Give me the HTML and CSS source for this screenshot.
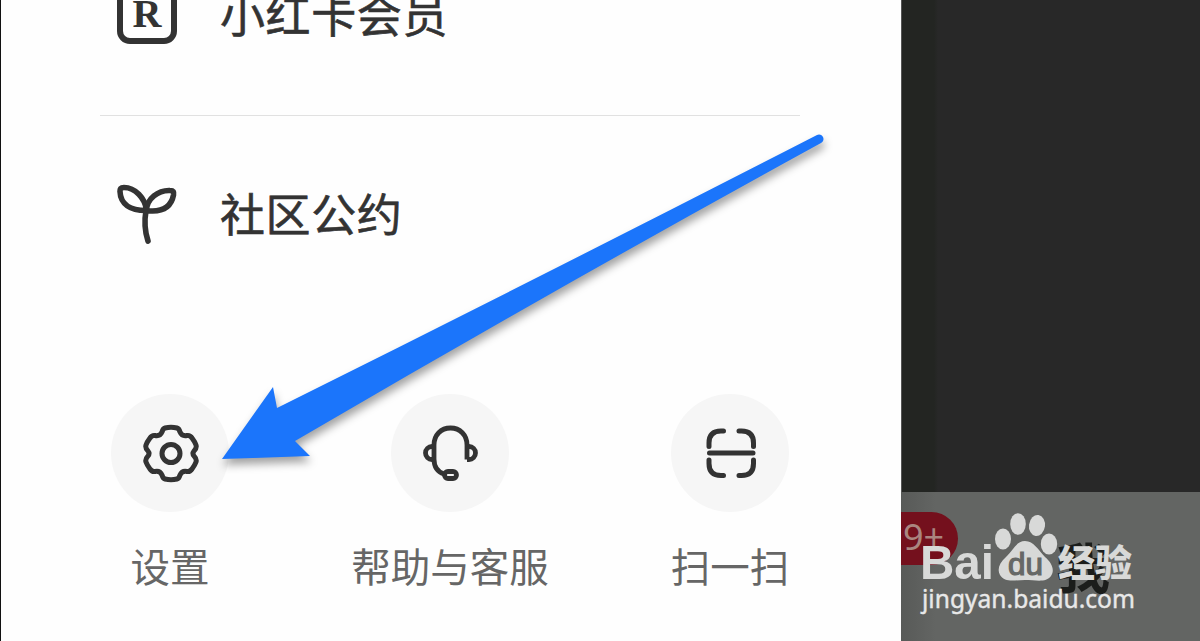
FILE: index.html
```
<!DOCTYPE html>
<html lang="zh-CN">
<head>
<meta charset="utf-8">
<title>设置</title>
<link rel="stylesheet" href="styles.css">
</head>
<body>
<div class="screen">
  <main class="drawer">
    <div class="row row-member">
      <svg class="row-icon" viewBox="0 0 64 64">
        <rect x="5" y="5" width="54" height="54" rx="10" fill="none" stroke="#333" stroke-width="6"/>
        <text class="card-letter" x="32" y="45" text-anchor="middle" textLength="29" lengthAdjust="spacingAndGlyphs">R</text>
      </svg>
      <span class="row-label">小红卡会员</span>
    </div>
    <hr class="divider">
    <div class="row row-rules">
      <svg class="row-icon" viewBox="0 0 64 64" fill="none" stroke="#333" stroke-width="5.600" stroke-linecap="round" stroke-linejoin="round">
        <path d="M31.500 28C30 16 20 5.500 9 5.500C5.500 5.500 5 7 5 9.500C5.500 22 15 28.500 31 28.500"/>
        <path d="M31.500 28C32 17 43 8 55 8.500C58.500 8.500 59 10 58.500 13C56 26 46 30.500 31 28.500C29 40 30 50 33 59"/>
      </svg>
      <span class="row-label">社区公约</span>
    </div>
    <nav class="tools">
      <div class="tool">
        <span class="tool-disc">
          <svg class="tool-icon" viewBox="0 0 60 60" fill="none" stroke="#333" stroke-width="5" stroke-linejoin="round">
            <path d="M25 5Q31 3.500 37 5Q39 5.500 40 9Q42 13.500 47 12.500Q50 12 52 15Q55 19 56 22Q57 25 54 28Q52 30.500 54 33Q57 36 56 39Q55 42 52 46Q50 49 47 48.500Q42 47.500 40 52Q39 55.500 37 56Q31 57.500 25 56Q23 55.500 22 52Q20 47.500 15 48.500Q12 49 10 46Q7 42 6 39Q5 36 8 33Q10 30.500 8 28Q5 25 6 22Q7 19 10 15Q12 12 15 12.500Q20 13.500 22 9Q23 5.500 25 5Z"/>
            <circle cx="31" cy="30.500" r="9"/>
          </svg>
        </span>
        <span class="tool-label">设置</span>
      </div>
      <div class="tool">
        <span class="tool-disc">
          <svg class="tool-icon" viewBox="0 0 60 60" fill="none" stroke="#333" stroke-width="4.800" stroke-linejoin="round">
            <path d="M47 36.500V22C47 12 40 5 30.500 5S14 12 14 22V36C14 45 18 49 24 51"/>
            <path d="M14 23.500H12A6.500 6.500 0 0 0 12 36.500H14"/>
            <path d="M47 23.500H49A6.500 6.500 0 0 1 49 36.500H47"/>
            <rect x="24.500" y="48.500" width="12" height="7" rx="3.500"/>
          </svg>
        </span>
        <span class="tool-label">帮助与客服</span>
      </div>
      <div class="tool">
        <span class="tool-disc">
          <svg class="tool-icon" viewBox="0 0 60 60" fill="none" stroke="#333" stroke-width="5" stroke-linecap="round">
            <path d="M9 23.500V20Q9 8 21 8H23.500M39 8H41.500Q53.500 8 53.500 20V23.500M9 37V40.500Q9 52.500 21 52.500H23.500M39 52.500H41.500Q53.500 52.500 53.500 40.500V37M9.500 30H53"/>
          </svg>
        </span>
        <span class="tool-label">扫一扫</span>
      </div>
    </nav>
  </main>
  <aside class="backdrop">
    <div class="backdrop-page"></div>
    <div class="tabbar">
      <span class="badge">9+</span>
      <span class="tab-me">我</span>
      <svg class="watermark" viewBox="0 0 299 149">
        <g class="wm-ink">
          <text class="wm-brand" x="19" y="87" textLength="74" lengthAdjust="spacingAndGlyphs">Bai</text>
          <ellipse cx="102" cy="47" rx="8" ry="10.500"/>
          <ellipse cx="117" cy="32" rx="7.800" ry="10.800"/>
          <ellipse cx="136" cy="33.500" rx="8" ry="10.500" transform="rotate(8 136 33.500)"/>
          <ellipse cx="148" cy="52" rx="8.200" ry="10.500"/>
          <path d="M124 49C115 49 112 59 105 65C98 71 96 78 99 83C104 91 113 88 124 88S145 91 150 84C154 78 151 71 144 65C137 58 133 49 124 49Z"/>
          <text class="wm-du" x="107" y="83" textLength="35" lengthAdjust="spacingAndGlyphs">du</text>
          <text class="wm-cn" x="157" y="85" textLength="74" lengthAdjust="spacingAndGlyphs">经验</text>
          <text class="wm-url" x="21" y="116" textLength="213" lengthAdjust="spacingAndGlyphs">jingyan.baidu.com</text>
        </g>
      </svg>
    </div>
  </aside>
  <svg class="pointer" viewBox="0 0 1200 641">
    <path class="pointer-shape" d="M222 459L273 387L277 408Q550 272 817 135A4.300 4.300 0 0 1 821 143Q560 286 295 441L310 456Z"/>
  </svg>
</div>
</body>
</html>
```
FILE: styles.css
```
body {
  margin: 0;
  font-family: "Noto Sans CJK SC", "Noto Sans", sans-serif;
}

.screen {
  position: relative;
  display: flex;
  width: 1200px;
  height: 641px;
  overflow: hidden;
  background: #fefefe;
}

.drawer {
  box-sizing: border-box;
  width: 901px;
  height: 641px;
  border-left: 1px solid #111;
  background: #fefefe;
}

.row {
  display: flex;
  align-items: center;
  gap: 41px;
  height: 100px;
  padding-left: 114px;
  color: #333;
}

.row-member {
  margin-top: -36px;
}

.row-icon {
  width: 64px;
  height: 64px;
}

.row-label {
  font-size: 45px;
  line-height: 64px;
  letter-spacing: 0.6px;
  white-space: nowrap;
  -webkit-text-stroke: 0.6px #333;
}

.card-letter {
  font: bold 39px "Liberation Serif", serif;
  fill: #333;
}

.divider {
  width: 700px;
  height: 1px;
  margin: 51px 0 0 99px;
  border: 0;
  background: #e1e1e1;
}

.row-rules {
  margin-top: 48px;
}

.row-rules .row-label {
  margin-top: -2px;
}

.tools {
  display: grid;
  grid-template-columns: repeat(3, 280px);
  margin: 130px 0 0 29px;
}

.tool {
  display: flex;
  flex-direction: column;
  align-items: center;
  gap: 25px;
}

.tool-disc {
  display: flex;
  align-items: center;
  justify-content: center;
  width: 118px;
  height: 118px;
  border-radius: 50%;
  background: #f6f6f6;
}

.tool-icon {
  width: 60px;
  height: 60px;
}

.tool-label {
  color: #666;
  font-size: 39.5px;
  line-height: 56px;
  white-space: nowrap;
}

.backdrop {
  display: flex;
  flex-direction: column;
  width: 299px;
  height: 641px;
}

.backdrop-page {
  height: 492px;
  background: linear-gradient(90deg, #555 0 1px, #232522 1px 33px, #282828 37px);
}

.tabbar {
  position: relative;
  flex: 1;
  overflow: hidden;
  background: linear-gradient(90deg, #585a58, #636563 35px);
}

.badge {
  display: block;
  box-sizing: border-box;
  width: 57px;
  height: 53px;
  margin-top: 20px;
  padding-left: 2px;
  border-radius: 0 27px 27px 0;
  background: #74101d;
  color: #aa8580;
  font: 36px/50px "Noto Sans", sans-serif;
  white-space: nowrap;
}

.tab-me {
  position: absolute;
  left: 155px;
  top: 36px;
  color: #1b1d1b;
  font-size: 54px;
  font-weight: 700;
  line-height: 76px;
}

.watermark {
  position: absolute;
  inset: 0;
  width: 299px;
  height: 149px;
}

.wm-ink {
  fill: #d8d9d8;
}

.wm-brand {
  font: bold 49px "Liberation Sans", sans-serif;
}

.wm-du {
  font: 31px "Liberation Sans", sans-serif;
  fill: #666866;
  stroke: #666866;
  stroke-width: 1.2px;
}

.wm-cn {
  font: 900 37px "Noto Sans CJK SC", sans-serif;
}

.wm-url {
  font: 25px "Noto Sans", sans-serif;
  fill: #e8e8e8;
  stroke: #e8e8e8;
  stroke-width: 0.4px;
}

.pointer {
  position: absolute;
  inset: 0;
  width: 1200px;
  height: 641px;
  pointer-events: none;
}

.pointer-shape {
  fill: #1b75fb;
  filter: drop-shadow(1px 6px 4px rgba(0, 0, 0, 0.36));
}
```
